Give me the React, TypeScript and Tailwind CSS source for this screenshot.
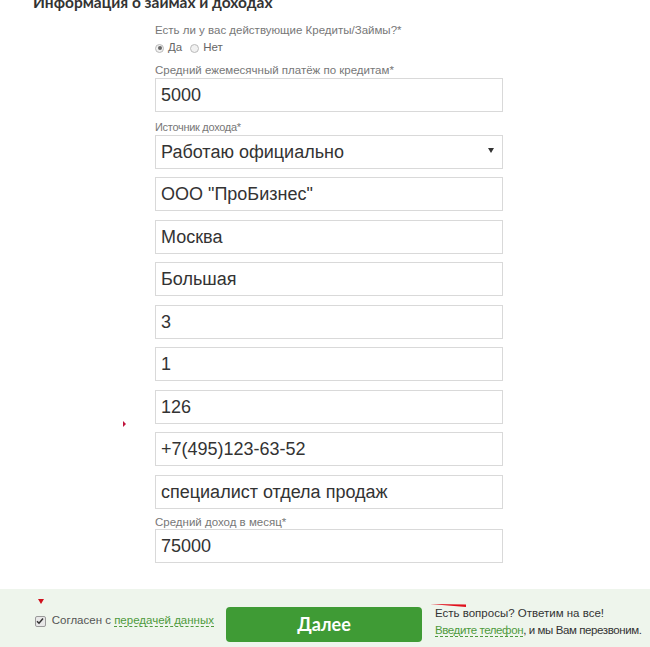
import React from "react"

const fieldCls =
  "w-full h-[34px] border border-[#d9d9d9] bg-white px-[5px] text-[18px] text-[#333] leading-[32px] font-['Liberation_Sans',Arial,sans-serif]"

function Field({ value }: { value: string }) {
  return <div className={fieldCls}>{value}</div>
}

function Label({ children, small }: { children: React.ReactNode; small?: boolean }) {
  return (
    <div
      className={`text-[#777] leading-[14px] ${
        small ? "text-[11px] tracking-[-0.3px]" : "text-[11.5px]"
      }`}
    >
      {children}
    </div>
  )
}

function Radio({ checked, label }: { checked?: boolean; label: string }) {
  return (
    <span className="flex items-center gap-[4px]">
      <span className="w-[9px] h-[9px] rounded-full border border-[#bbb] bg-[#f1f1f1] flex items-center justify-center">
        {checked && <span className="w-[4px] h-[4px] rounded-full bg-[#666]" />}
      </span>
      <span className="text-[11.5px] text-[#666]">{label}</span>
    </span>
  )
}

export default function App() {
  const fields = [
    "ООО \"ПроБизнес\"",
    "Москва",
    "Большая",
    "3",
    "1",
    "126",
    "+7(495)123-63-52",
    "специалист отдела продаж",
  ]

  return (
    <div className="w-[650px] h-[647px] bg-white overflow-hidden relative font-['Liberation_Sans',Arial,sans-serif]">
      {/* Заголовок */}
      <div className="pl-[33px] -mt-[7px] h-[18px] text-[15.5px] leading-[18px] font-bold text-[#333] font-['Lato',sans-serif]">
        Информация о займах и доходах
      </div>

      <div className="ml-[155px] w-[348px] flex flex-col">
        <div className="mt-[12px]">
          <Label>Есть ли у вас действующие Кредиты/Займы?*</Label>
        </div>
        <div className="flex items-center gap-[8px] mt-[4px] h-[14px]">
          <Radio checked label="Да" />
          <Radio label="Нет" />
        </div>
        <div className="mt-[8px]">
          <Label>Средний ежемесячный платёж по кредитам*</Label>
        </div>
        <div className="mt-[1px]">
          <Field value="5000" />
        </div>

        <div className="mt-[8px]">
          <Label small>Источник дохода*</Label>
        </div>
        <div className="mt-[1px] relative">
          <div className={fieldCls}>Работаю официально</div>
          <span className="absolute right-[9px] top-[13px] w-0 h-0 border-l-[3px] border-r-[3px] border-t-[5px] border-l-transparent border-r-transparent border-t-[#333]" />
        </div>

        <div className="flex flex-col gap-[8.5px] mt-[8px]">
          {fields.map((f) => (
            <Field key={f} value={f} />
          ))}
        </div>

        <div className="mt-[6px]">
          <Label>Средний доход в месяц*</Label>
        </div>
        <div>
          <Field value="75000" />
        </div>
      </div>

      {/* маленький красный маркер */}
      <span className="absolute left-[123px] top-[421px] w-0 h-0 border-t-[3px] border-b-[3px] border-l-[3px] border-t-transparent border-b-transparent border-l-[#c0143c]" />

      {/* Нижняя панель */}
      <div className="absolute left-0 right-0 bottom-0 h-[58px] bg-[#eef5ec] flex items-center whitespace-nowrap">
        <div className="relative flex items-center ml-[35px] w-[179px] gap-[6px] mt-[6px]">
          <span className="absolute left-[3px] -top-[13px] w-0 h-0 border-l-[3px] border-r-[3px] border-t-[5px] border-l-transparent border-r-transparent border-t-[#d0101c]" />
          <span className="w-[11px] h-[11px] border border-[#999] bg-[#e8e8e8] rounded-[2px] flex items-center justify-center">
            <svg width="8" height="8" viewBox="0 0 8 8">
              <path d="M1 4.2 L3 6.2 L7 1.5" stroke="#333" strokeWidth="1.5" fill="none" />
            </svg>
          </span>
          <span className="text-[11.5px] text-[#555]">
            Согласен с{" "}
            <span className="text-[#4f9a3c] border-b border-dashed border-[#4f9a3c]">передачей данных</span>
          </span>
        </div>

        <button className="ml-[12px] mt-[12px] w-[196px] h-[35px] shrink-0 rounded-[4px] bg-[#3f9b35] text-white text-[18px] font-bold font-['Lato',sans-serif]">
          Далее
        </button>

        <div className="relative ml-[13px] mt-[8px] text-[11.5px] leading-[17px] text-[#333]">
          <span className="absolute -left-[5px] -top-[1px] w-[36px] h-[3px] bg-[#e0101c] [clip-path:polygon(0_0,100%_20%,100%_100%)]" />
          <div>Есть вопросы? Ответим на все!</div>
          <div className="tracking-[-0.4px]">
            <span className="text-[#4f9a3c] border-b border-dashed border-[#4f9a3c]">Введите телефон</span>, и мы Вам перезвоним.
          </div>
        </div>
      </div>
    </div>
  )
}
